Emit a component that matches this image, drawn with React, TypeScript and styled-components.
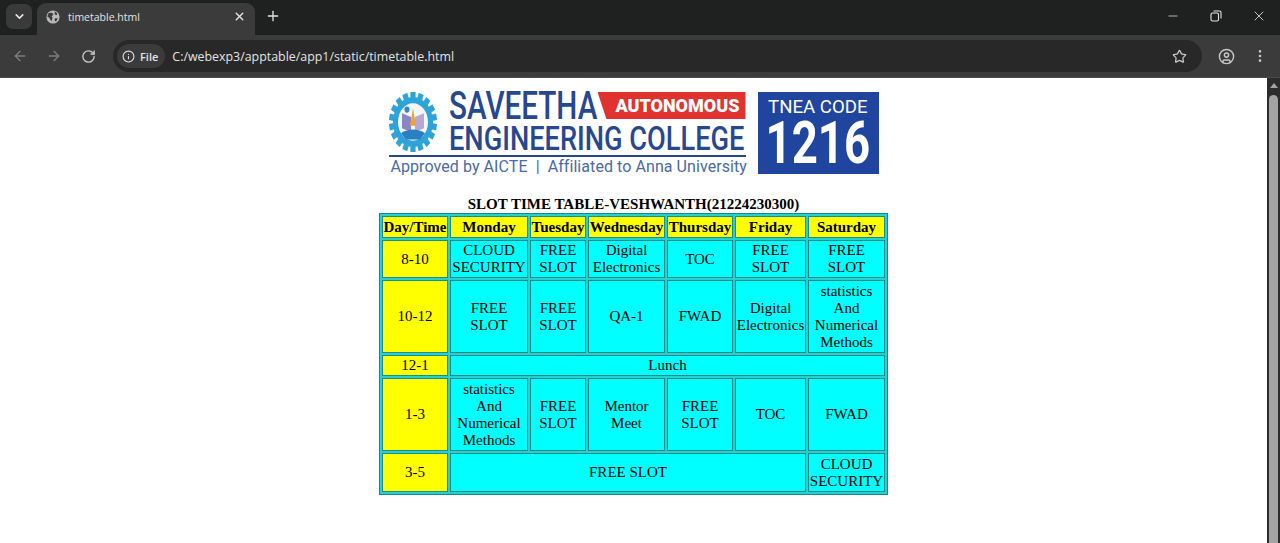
import styled, { createGlobalStyle } from "styled-components";
import {
  ArrowLeft,
  ArrowRight,
  ChevronDown,
  CircleUser,
  EllipsisVertical,
  Info,
  Minus,
  Plus,
  RotateCw,
  Star,
  X,
} from "lucide-react";

const GlobalStyle = createGlobalStyle`
  html, body {
    margin: 0;
    padding: 0;
    height: 100%;
    overflow: hidden;
    background: #fff;
  }
`;

const Window = styled.div`
  width: 1280px;
  height: 543px;
  display: flex;
  flex-direction: column;
  font-family: "Open Sans", "Noto Sans", sans-serif;
`;

const TabStrip = styled.div`
  height: 35px;
  flex: none;
  display: flex;
  align-items: flex-end;
  background: #1f2121;
  color: #e3e3e3;
`;

const TabSearch = styled.div`
  width: 26px;
  height: 25px;
  margin: 0 5px 6px 6px;
  border-radius: 7px;
  background: #3a3a3a;
  display: flex;
  align-items: center;
  justify-content: center;
`;

const Tab = styled.div`
  width: 218px;
  height: 32px;
  padding: 0 9px 5px 9px;
  box-sizing: border-box;
  border-radius: 9px 9px 0 0;
  background: #3b3b3b;
  display: flex;
  align-items: center;
  gap: 8px;
  font-size: 10.5px;
`;

const TabTitle = styled.span`
  flex: 1;
`;

const NewTab = styled.div`
  width: 30px;
  height: 30px;
  margin: 0 0 4px 3px;
  display: flex;
  align-items: center;
  justify-content: center;
`;

const WindowControls = styled.div`
  margin-left: auto;
  height: 35px;
  align-self: flex-start;
  display: flex;
`;

const WindowButton = styled.div`
  width: 43px;
  height: 31px;
  display: flex;
  align-items: center;
  justify-content: center;
`;

const Toolbar = styled.div`
  height: 43px;
  flex: none;
  box-sizing: border-box;
  padding: 0 3px;
  display: flex;
  align-items: center;
  background: #3b3b3b;
  border-bottom: 1px solid #4a4a4a;
`;

const NavButton = styled.div<{ $dim?: boolean }>`
  width: 34px;
  height: 32px;
  flex: none;
  display: flex;
  align-items: center;
  justify-content: center;
  color: ${(p) => (p.$dim ? "#7d7d7d" : "#c7c7c7")};
`;

const Omnibox = styled.div`
  width: 1089px;
  height: 32px;
  flex: none;
  margin: 0 7px 0 8px;
  padding: 0 15px 0 4px;
  box-sizing: border-box;
  border-radius: 16px;
  background: #282828;
  display: flex;
  align-items: center;
  color: #e3e3e3;
  font-size: 12.4px;
`;

const SiteChip = styled.div`
  height: 24px;
  padding: 0 7px 0 5px;
  border-radius: 12px;
  background: #3b3b3b;
  display: flex;
  align-items: center;
  gap: 5px;
  margin-right: 7px;
  font-size: 11px;
  font-weight: 600;
`;

const Url = styled.span`
  flex: 1;
`;

const Viewport = styled.div`
  flex: 1;
  display: flex;
  min-height: 0;
`;

const Page = styled.div`
  flex: 1;
  background: #fff;
  display: flex;
  flex-direction: column;
  align-items: center;
  padding-top: 14px;
  font-family: "Liberation Serif", "Times New Roman", serif;
  font-size: 15px;
  color: #000;
`;

const Scrollbar = styled.div`
  width: 13px;
  flex: none;
  background: #2c2c2c;
  display: flex;
  flex-direction: column;
  align-items: center;
`;

const ScrollArrow = styled.div`
  margin-top: 5px;
  width: 0;
  height: 0;
  border-left: 4px solid transparent;
  border-right: 4px solid transparent;
  border-bottom: 5px solid #a3a3a3;
`;

const ScrollThumb = styled.div`
  margin-top: 7px;
  width: 9px;
  flex: 1;
  border-radius: 5px 5px 0 0;
  background: #a3a3a3;
`;

const Logo = styled.div`
  width: 490px;
  height: 82px;
  flex: none;
  display: flex;
  font-family: Roboto, "Open Sans", sans-serif;
`;

const Wordmark = styled.div`
  width: 357px;
  display: grid;
  grid-template-columns: 60px 297px;
  grid-template-rows: 63px auto 1fr;
`;

const NameBlock = styled.div`
  width: 297px;
  display: flex;
  flex-direction: column;
`;

const NameRow = styled.div`
  height: 33px;
  display: flex;
`;

const Saveetha = styled.div`
  width: 149px;
  flex: none;
  color: #27478f;
  font-size: 38px;
  font-weight: 500;
  line-height: 29px;
  white-space: nowrap;
  transform: scaleX(0.78);
  transform-origin: left center;
`;

const Banner = styled.div`
  width: 148px;
  height: 27px;
  flex: none;
  background: #e0332f;
  color: #fff;
  font-size: 18px;
  font-weight: 900;
  line-height: 27px;
  text-align: right;
  padding-right: 6px;
  box-sizing: border-box;
  white-space: nowrap;
  clip-path: polygon(0 0, 100% 0, 100% 100%, 6% 100%);
`;

const College = styled.div`
  width: 297px;
  color: #27478f;
  font-size: 34px;
  font-weight: 500;
  line-height: 26px;
  white-space: nowrap;
  transform: scaleX(0.8);
  transform-origin: left center;
`;

const Rule = styled.div`
  grid-column: 1 / 3;
  height: 2px;
  background: #27478f;
`;

const Approved = styled.div`
  grid-column: 1 / 3;
  padding: 1px 0 0 2px;
  color: #4a6aa8;
  font-size: 16px;
  line-height: 18px;
  letter-spacing: 0.07px;
  white-space: nowrap;
`;

const CodeBox = styled.div`
  width: 121px;
  height: 82px;
  margin-left: 12px;
  background: #1f459f;
  color: #fff;
  display: flex;
  flex-direction: column;
  align-items: center;
`;

const CodeLabel = styled.div`
  font-size: 19px;
  line-height: 24px;
  margin-top: 3px;
  white-space: nowrap;
  transform: scaleX(0.98);
`;

const CodeNumber = styled.div`
  font-size: 60px;
  font-weight: 700;
  line-height: 48px;
  transform: scaleX(0.76);
`;

const Table = styled.table`
  margin-top: 22px;
  border: 1px solid #128a8a;
  border-spacing: 2px;
  background: #24d0d0;
  table-layout: fixed;
  width: 509px;
  font-size: 15px;
  line-height: 17px;
  text-align: center;
`;

const Caption = styled.caption`
  font-weight: 700;
  line-height: 17px;
`;

const Cell = styled.td<{ $h?: boolean; $height?: number }>`
  padding: 0;
  border: 1px solid #1f8a8a;
  background: ${(p) => (p.$h ? "#ffff00" : "#00ffff")};
  height: ${(p) => p.$height ?? 17}px;
  vertical-align: middle;
`;

const Head = styled(Cell).attrs({ as: "th", $h: true })`
  font-weight: 700;
  height: 20px;
  white-space: nowrap;
`;

const widths = [66, 78, 56, 77, 66, 71, 77];
const days = ["Day/Time", "Monday", "Tuesday", "Wednesday", "Thursday", "Friday", "Saturday"];

const Stats = () => (
  <>
    statistics
    <br />
    And
    <br />
    Numerical
    <br />
    Methods
  </>
);

const Two = ({ a, b }: { a: string; b: string }) => (
  <>
    {a}
    <br />
    {b}
  </>
);

const Free = () => <Two a="FREE" b="SLOT" />;

// college crest: the reference stretches it, so the circle is drawn taller than wide
const Emblem = () => {
  const teeth = Array.from({ length: 18 }, (_, i) => i * 20);
  return (
    <svg width="48" height="60" viewBox="0 0 48 48" preserveAspectRatio="none">
      <g transform="translate(24 24)">
        {teeth.map((a) => (
          <rect key={a} x="-2.6" y="-24" width="5.2" height="6" fill="#2ea3d8" transform={`rotate(${a})`} />
        ))}
        <circle r="20" fill="#2ea3d8" />
        <circle r="15" fill="#f1f7fb" />
        <path d="M-11-7-2-4V8L-11 5Z" fill="#8a86c4" />
        <path d="M11-7 2-4V8L11 5Z" fill="#b7a6d6" />
        <path d="M0-11 3 3H-3Z" fill="#e8a33a" />
        <path d="M-12 9C-5 5 5 5 12 9L7 14H-7Z" fill="#2a7fc0" />
        <circle cx="-6" cy="-10" r="2.5" fill="#3f7fc4" />
      </g>
    </svg>
  );
};

const GlobeIcon = () => (
  <svg width="14" height="14" viewBox="0 0 16 16">
    <circle cx="8" cy="8" r="7.5" fill="#b9b9b9" />
    <path d="M3 3.5 7 3 8.5 5 6.5 7 7.5 9 6 13 4 9 1.5 7.5ZM10 1.5 13 4 12 6 10 5ZM10 9.5 13.5 9.5 11.5 13 10 12.5Z" fill="#3b3b3b" />
  </svg>
);

const RestoreIcon = () => (
  <svg width="12" height="12" viewBox="0 0 12 12" fill="none" stroke="#e3e3e3" strokeWidth="1.1">
    <rect x="1" y="3" width="7.5" height="8" rx="1.5" />
    <path d="M3.5 1H9.5A1.5 1.5 0 0 1 11 2.5V8.5" />
  </svg>
);

export default function App() {
  return (
    <Window>
      <GlobalStyle />
      <TabStrip>
        <TabSearch>
          <ChevronDown size={13} strokeWidth={3} />
        </TabSearch>
        <Tab>
          <GlobeIcon />
          <TabTitle>timetable.html</TabTitle>
          <X size={13} strokeWidth={2.5} />
        </Tab>
        <NewTab>
          <Plus size={16} strokeWidth={2} />
        </NewTab>
        <WindowControls>
          <WindowButton>
            <Minus size={14} strokeWidth={1.3} />
          </WindowButton>
          <WindowButton>
            <RestoreIcon />
          </WindowButton>
          <WindowButton>
            <X size={16} strokeWidth={1.3} />
          </WindowButton>
        </WindowControls>
      </TabStrip>
      <Toolbar>
        <NavButton $dim>
          <ArrowLeft size={16} />
        </NavButton>
        <NavButton $dim>
          <ArrowRight size={16} />
        </NavButton>
        <NavButton>
          <RotateCw size={15} strokeWidth={2.2} />
        </NavButton>
        <Omnibox>
          <SiteChip>
            <Info size={13} />
            File
          </SiteChip>
          <Url>C:/webexp3/apptable/app1/static/timetable.html</Url>
          <Star size={15} strokeWidth={2} color="#c7c7c7" />
        </Omnibox>
        <NavButton>
          <CircleUser size={17} />
        </NavButton>
        <NavButton>
          <EllipsisVertical size={16} />
        </NavButton>
      </Toolbar>
      <Viewport>
        <Page>
          <Logo>
            <Wordmark>
              <Emblem />
              <NameBlock>
                <NameRow>
                  <Saveetha>SAVEETHA</Saveetha>
                  <Banner>AUTONOMOUS</Banner>
                </NameRow>
                <College>ENGINEERING COLLEGE</College>
              </NameBlock>
              <Rule />
              <Approved>Approved by AICTE&nbsp; | &nbsp;Affiliated to Anna University</Approved>
            </Wordmark>
            <CodeBox>
              <CodeLabel>TNEA CODE</CodeLabel>
              <CodeNumber>1216</CodeNumber>
            </CodeBox>
          </Logo>
          <Table>
            <Caption>SLOT TIME TABLE-VESHWANTH(21224230300)</Caption>
            <colgroup>
              {widths.map((w, i) => (
                <col key={i} style={{ width: w }} />
              ))}
            </colgroup>
            <tbody>
              <tr>
                {days.map((d) => (
                  <Head key={d}>{d}</Head>
                ))}
              </tr>
              <tr>
                <Cell $h $height={36}>8-10</Cell>
                <Cell><Two a="CLOUD" b="SECURITY" /></Cell>
                <Cell><Free /></Cell>
                <Cell><Two a="Digital" b="Electronics" /></Cell>
                <Cell>TOC</Cell>
                <Cell><Free /></Cell>
                <Cell><Free /></Cell>
              </tr>
              <tr>
                <Cell $h $height={71}>10-12</Cell>
                <Cell><Free /></Cell>
                <Cell><Free /></Cell>
                <Cell>QA-1</Cell>
                <Cell>FWAD</Cell>
                <Cell><Two a="Digital" b="Electronics" /></Cell>
                <Cell><Stats /></Cell>
              </tr>
              <tr>
                <Cell $h $height={19}>12-1</Cell>
                <Cell colSpan={6}>Lunch</Cell>
              </tr>
              <tr>
                <Cell $h $height={71}>1-3</Cell>
                <Cell><Stats /></Cell>
                <Cell><Free /></Cell>
                <Cell><Two a="Mentor" b="Meet" /></Cell>
                <Cell><Free /></Cell>
                <Cell>TOC</Cell>
                <Cell>FWAD</Cell>
              </tr>
              <tr>
                <Cell $h $height={37}>3-5</Cell>
                <Cell colSpan={5}>FREE SLOT</Cell>
                <Cell><Two a="CLOUD" b="SECURITY" /></Cell>
              </tr>
            </tbody>
          </Table>
        </Page>
        <Scrollbar>
          <ScrollArrow />
          <ScrollThumb />
        </Scrollbar>
      </Viewport>
    </Window>
  );
}
